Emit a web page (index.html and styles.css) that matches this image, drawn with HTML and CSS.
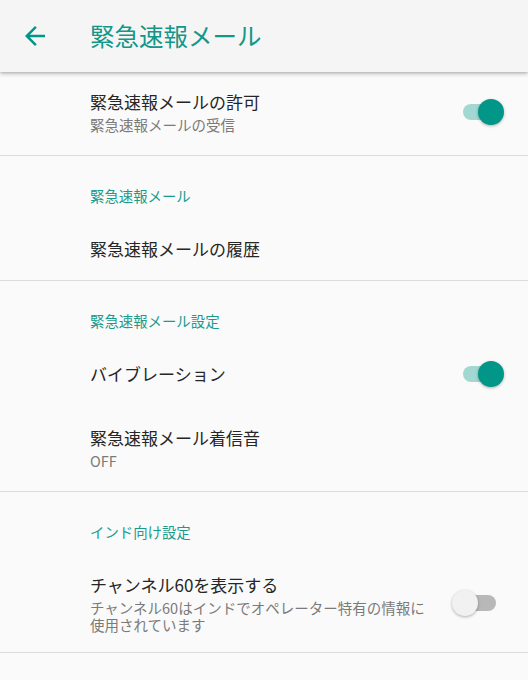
FILE: index.html
```html
<!DOCTYPE html>
<html lang="ja">
<head>
<meta charset="utf-8">
<link rel="stylesheet" href="styles.css">
</head>
<body>
<header class="appbar">
  <svg class="back" viewBox="0 0 24 24" width="30" height="30"><path d="M20 11H7.83l5.59-5.59L12 4l-8 8 8 8 1.41-1.41L7.83 13H20v-2z" fill="#009688"/></svg>
  <h1 class="appbar-title">緊急速報メール</h1>
</header>
<main class="list">
  <div class="item item-switch">
    <div class="texts">
      <div class="title">緊急速報メールの許可</div>
      <div class="summary">緊急速報メールの受信</div>
    </div>
    <div class="switch on"><span class="track"></span><span class="thumb"></span></div>
  </div>
  <div class="divider"></div>
  <div class="category">緊急速報メール</div>
  <div class="item item-single">
    <div class="texts"><div class="title">緊急速報メールの履歴</div></div>
  </div>
  <div class="divider"></div>
  <div class="category">緊急速報メール設定</div>
  <div class="item item-switch">
    <div class="texts"><div class="title">バイブレーション</div></div>
    <div class="switch on"><span class="track"></span><span class="thumb"></span></div>
  </div>
  <div class="item">
    <div class="texts">
      <div class="title">緊急速報メール着信音</div>
      <div class="summary">OFF</div>
    </div>
  </div>
  <div class="divider"></div>
  <div class="category">インド向け設定</div>
  <div class="item item-switch item-last">
    <div class="texts">
      <div class="title">チャンネル60を表示する</div>
      <div class="summary">チャンネル60はインドでオペレーター特有の情報に使用されています</div>
    </div>
    <div class="switch off"><span class="track"></span><span class="thumb"></span></div>
  </div>
  <div class="divider"></div>
</main>
</body>
</html>
```

FILE: styles.css
```css
* { box-sizing: border-box; }
html, body { margin: 0; padding: 0; }
body {
  width: 528px;
  height: 680px;
  overflow: hidden;
  background: #fafafa;
  font-family: "Noto Sans CJK JP", "Noto Sans", Roboto, sans-serif;
  color: #222;
}
.appbar {
  position: relative;
  z-index: 2;
  height: 72px;
  background: #f5f5f5;
  display: flex;
  align-items: center;
  box-shadow: 0 2px 4px rgba(0,0,0,0.22), 0 1px 2px rgba(0,0,0,0.1);
}
.back { margin-left: 20px; flex: none; }
.appbar-title {
  margin: 0 0 0 40px;
  font-size: 24.5px;
  font-weight: 400;
  color: #129788;
  line-height: 30px;
}
.list { display: flex; flex-direction: column; }
.divider { height: 1px; background: #dcdcdc; }
.category {
  padding: 30px 0 13px 90px;
  font-size: 14.4px;
  line-height: 20px;
  color: #1a9b8d;
}
.item {
  display: flex;
  align-items: center;
  padding: 18px 24px 22px 90px;
}
.item-single { padding-bottom: 19px; }
.item-last { padding-bottom: 19px; }
.texts { flex: 1; min-width: 0; }
.title { font-size: 17px; line-height: 24px; color: #262626; }
.summary {
  margin-top: 2px;
  font-size: 14.5px;
  line-height: 17px;
  color: #7a7a7a;
}
.switch {
  position: relative;
  flex: none;
  width: 44px;
  height: 26px;
  margin: -1px 0 -1px 28px;
}
.track {
  position: absolute;
  left: 3px;
  top: 5px;
  width: 37px;
  height: 16px;
  border-radius: 8px;
}
.thumb {
  position: absolute;
  top: 0;
  width: 26px;
  height: 26px;
  border-radius: 50%;
  box-shadow: 0 1px 3px rgba(0,0,0,0.3);
}
.switch.on .track { background: #a3d7d1; }
.switch.on .thumb { left: 18px; background: #009688; }
.switch.off .track { background: #b8b8b8; left: 0; width: 36px; }
.switch.off .thumb { left: -8px; background: #f1f1f1; }
```
